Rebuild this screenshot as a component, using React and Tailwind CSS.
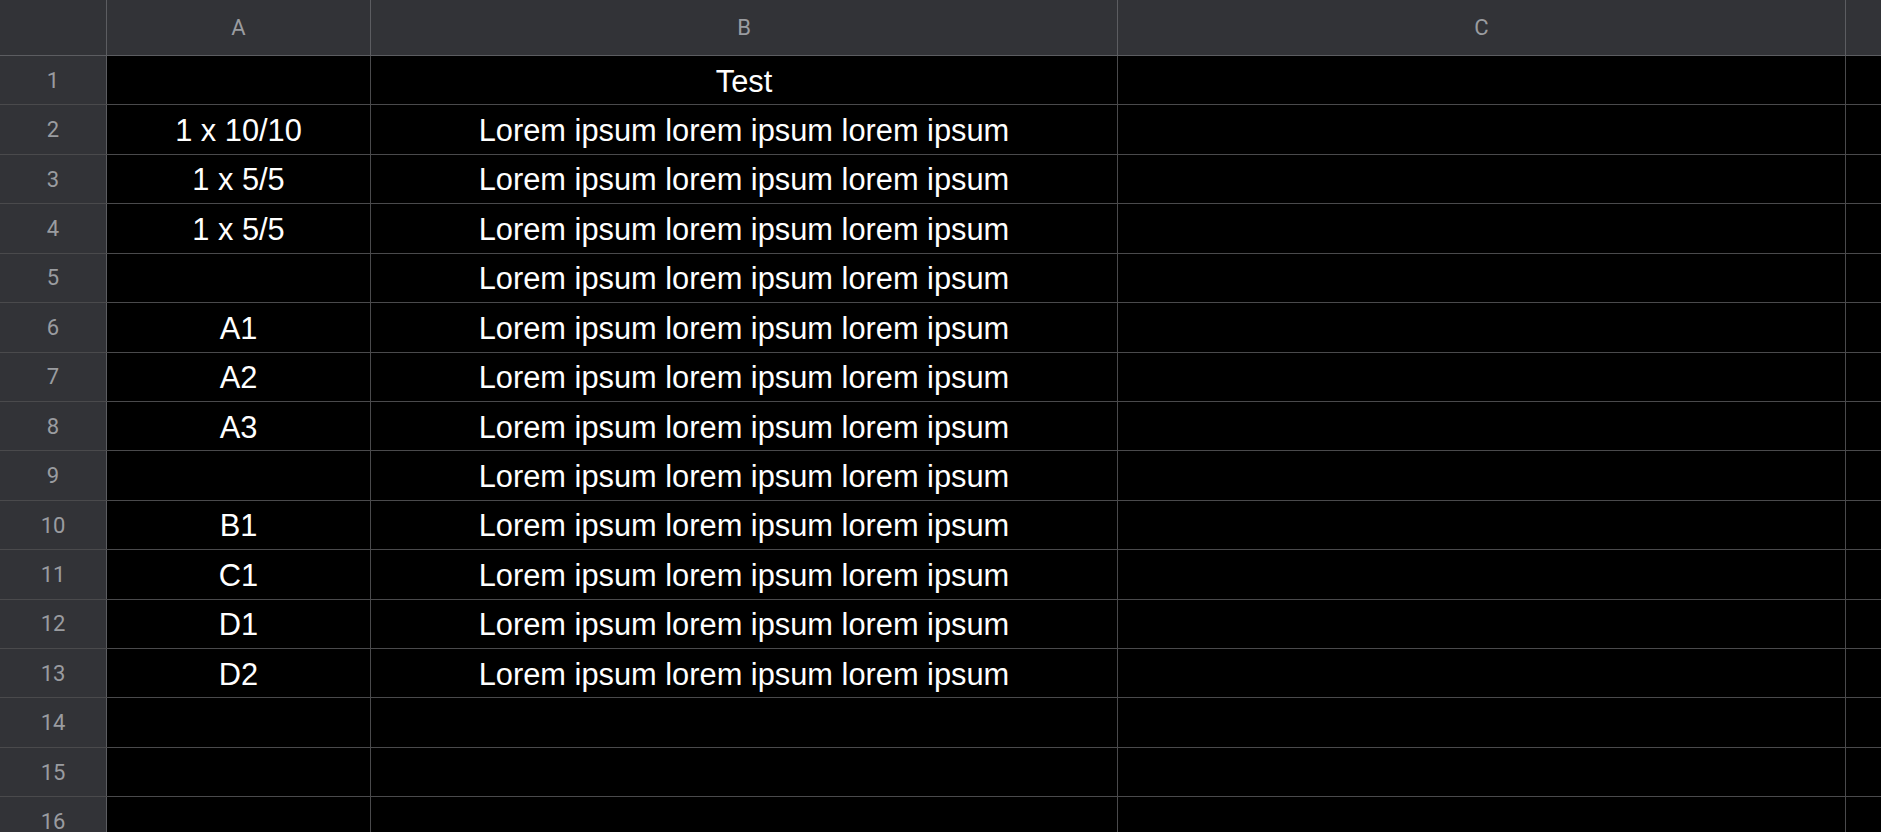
const rows = [
  ['', 'Test'],
  ['1 x 10/10', 'Lorem ipsum lorem ipsum lorem ipsum'],
  ['1 x 5/5', 'Lorem ipsum lorem ipsum lorem ipsum'],
  ['1 x 5/5', 'Lorem ipsum lorem ipsum lorem ipsum'],
  ['', 'Lorem ipsum lorem ipsum lorem ipsum'],
  ['A1', 'Lorem ipsum lorem ipsum lorem ipsum'],
  ['A2', 'Lorem ipsum lorem ipsum lorem ipsum'],
  ['A3', 'Lorem ipsum lorem ipsum lorem ipsum'],
  ['', 'Lorem ipsum lorem ipsum lorem ipsum'],
  ['B1', 'Lorem ipsum lorem ipsum lorem ipsum'],
  ['C1', 'Lorem ipsum lorem ipsum lorem ipsum'],
  ['D1', 'Lorem ipsum lorem ipsum lorem ipsum'],
  ['D2', 'Lorem ipsum lorem ipsum lorem ipsum'],
  ['', ''],
  ['', ''],
  ['', ''],
];

const App = () => {
  return (
    <div className="w-[1881px] h-[832px] overflow-hidden bg-black">
      {/* column headers */}
      <div className="flex h-[56px] bg-[#323337] border-b border-[#5c5d61] font-['Roboto',sans-serif] text-[22px] text-[#9a9ca0]">
        <div className="w-[107px] shrink-0 border-r border-[#5c5d61]" />
        <div className="w-[264px] shrink-0 border-r border-[#5c5d61] flex items-center justify-center">A</div>
        <div className="w-[747px] shrink-0 border-r border-[#5c5d61] flex items-center justify-center">B</div>
        <div className="w-[728px] shrink-0 border-r border-[#5c5d61] flex items-center justify-center">C</div>
        <div className="flex-1" />
      </div>

      {/* grid rows */}
      {rows.map((r, i) => (
        <div key={i} className="flex h-[49.43px] border-b border-[#4a4a4c]">
          <div className="w-[107px] shrink-0 bg-[#323337] border-r border-[#5c5d61] flex items-center justify-center font-['Roboto',sans-serif] text-[22px] text-[#9a9ca0]">
            {i + 1}
          </div>
          <div className="w-[264px] shrink-0 border-r border-[#4a4a4c] flex items-center justify-center pt-[3px] font-['Liberation_Sans',Arial,sans-serif] text-[30.8px] text-white">
            {r[0]}
          </div>
          <div className="w-[747px] shrink-0 border-r border-[#4a4a4c] flex items-center justify-center pt-[3px] font-['Liberation_Sans',Arial,sans-serif] text-[30.8px] text-white">
            {r[1]}
          </div>
          <div className="w-[728px] shrink-0 border-r border-[#4a4a4c]" />
          <div className="flex-1" />
        </div>
      ))}
    </div>
  );
};

export default App;
